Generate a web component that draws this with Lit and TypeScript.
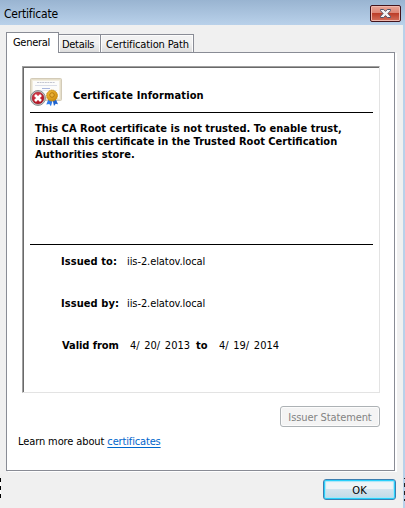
import { LitElement, html, css } from "lit";
import { customElement } from "lit/decorators.js";

@customElement("cert-icon")
class CertIcon extends LitElement {
  static styles = css`
    :host { display: block; width: 32px; height: 29px; }
    svg { display: block; }
  `;
  render() {
    return html`<svg width="32" height="29" viewBox="0 0 32 29">
      <defs>
        <radialGradient id="red" cx=".4" cy=".3" r=".8">
          <stop offset="0" stop-color="#dc4450" /><stop offset="1" stop-color="#a80818" />
        </radialGradient>
        <radialGradient id="gold" cx=".4" cy=".35" r=".75">
          <stop offset="0" stop-color="#f5c040" /><stop offset="1" stop-color="#c98505" />
        </radialGradient>
      </defs>
      <rect x=".5" y=".5" width="31" height="22" rx="1" fill="#e6dfcb" stroke="#d3cbb8" />
      <rect x="2.5" y="2.5" width="27" height="18" fill="#fcfcfb" stroke="#f2eddf" />
      <path d="M7 4.5h18" stroke="#c4c6d0" stroke-dasharray="2 .6" />
      <path d="M5 7.5h22" stroke="#dadde8" />
      <path d="M12 10.5h8" stroke="#a9b6dd" />
      <path d="M5 12.5h22" stroke="#e6e8ef" />
      <path d="M18.5 21l-2.200 5.500 3-.6 1.600 2.300 2-6.500z" fill="#2e7cec" />
      <path d="M22.500 21.500l1.500 6.500 1.700-2.300 2.300.5-2.600-6z" fill="#1e63cf" />
      <circle cx="22" cy="17.600" r="5.500" fill="url(#gold)" stroke="#c58a17" stroke-width=".8" stroke-dasharray="1.500 .5" />
      <circle cx="22" cy="17" r="2.300" fill="#eab23a" stroke="#a96b03" stroke-width=".8" />
      <circle cx="8" cy="20" r="7.400" fill="#d3d6d7" stroke="#858b8c" />
      <circle cx="8" cy="20" r="6" fill="url(#red)" stroke="#8b2731" stroke-width=".5" />
      <path d="M5 17l6 6M11 17l-6 6" stroke="#fff" stroke-width="2.600" />
    </svg>`;
  }
}

@customElement("app-root")
class AppRoot extends LitElement {
  static styles = css`
    * { box-sizing: border-box; }
    :host {
      display: block; position: relative; width: 405px; height: 508px; overflow: hidden;
      background: #f0f0f0; color: #000;
      font: 11px/13px "DejaVu Sans Condensed", "DejaVu Sans", sans-serif;
      font-stretch: condensed; white-space: nowrap;
    }
    b { font-weight: 700; }
    .window { height: 508px; display: flex; flex-direction: column; border-right: 2px solid #b9d1ea; }
    .titlebar {
      height: 25px; margin-right: -2px; padding: 5px 4px 0 4px; display: flex; justify-content: space-between;
      background: linear-gradient(#99b4d1, #b9d1ea); font-size: 12px; line-height: 19px;
    }
    .t-title { letter-spacing: -.2px; }
    .t-general { letter-spacing: -.3px; }
    .t-details { letter-spacing: -.3px; }
    .t-path { letter-spacing: -.13px; }
    .t-info { letter-spacing: .13px; }
    .t-m1 { letter-spacing: .02px; }
    .t-m3, .t-to, .t-by { letter-spacing: .08px; }
    .t-from { letter-spacing: -.05px; }
    .t-host { letter-spacing: -.08px; }
    .t-date { word-spacing: 1.5px; }
    .t-issuer { letter-spacing: -.1px; }
    .t-more { letter-spacing: -.11px; }
    .t-link { letter-spacing: -.15px; }
    .close {
      width: 31px; height: 17px; border: 1px solid #43141c; border-radius: 2px;
      box-shadow: inset 0 0 0 1px #f0b8ae;
      background: linear-gradient(#e9a596 0, #dc8474 48%, #bc3e29 50%, #d4705c 100%);
    }
    .close svg { display: block; margin: 3px 0 0 9px; }
    .tabs { display: flex; align-items: flex-end; height: 21px; margin: 7px 0 -1px 6px; z-index: 1; }
    .tab {
      height: 19px; border: 1px solid #898c95; border-left-width: 0; padding: 3px 0 0 3px;
      box-shadow: inset 1px 1px #fcfcfc, inset -1px 0 #fcfcfc;
      background: linear-gradient(#f2f2f2 45%, #dddddd);
    }
    .tab.on { width: 53px; height: 21px; border-left-width: 1px; border-bottom: 0; background: #fff; padding: 3px 0 0 6px; box-shadow: none; }
    .details { width: 42px; }
    .path { width: 93px; padding-left: 5px; }
    .panel {
      width: 389px; height: 419px; margin-left: 6px; border: 1px solid #898c95; background: #fff;
      box-shadow: 2px 1px #fff; padding: 13px 14px 0 15px; display: flex; flex-direction: column;
    }
    .sheet {
      height: 327px; border: 1px solid; border-color: #a0a0a0 #e3e3e3 #e3e3e3 #a0a0a0;
      box-shadow: inset 1px 1px #696969; padding: 11px 6px 0 7px;
    }
    .head { display: flex; height: 35px; border-bottom: 1px solid #000; }
    .head b { margin: 11px 0 0 11px; }
    .message { height: 132px; padding: 9px 0 0 5px; border-bottom: 1px solid #000; font-weight: 700; }
    .message div { height: 13px; }
    .row { display: flex; height: 42px; padding-left: 31px; }
    .row b { width: 66px; }
    .rows { padding-top: 10px; }
    .date { display: flex; }
    .date b { width: 23px; }
    .date span { width: 69px; padding-left: 3px; }
    .date .until { padding-left: 0; }
    .row.valid { padding-left: 32px; }
    .valid > b { width: 65px; }
    .btn { font: inherit; padding: 0; border-radius: 3px; display: block; }
    .issuer {
      width: 100px; height: 21px; margin: 13px 0 0 auto; padding-top: 1px; color: #838383;
      border: 1px solid #adb2b5; background: #f4f4f4; box-shadow: inset 0 0 0 1px #fcfcfc;
    }
    .more { margin: 8px 0 0 -4px; }
    a { color: #0066cc; text-decoration: underline; text-underline-offset: 2px; }
    .ok {
      width: 73px; height: 21px; margin: 8px 7px 0 auto; padding-top: 1px; color: #000; border: 1px solid #3c7fb1;
      box-shadow: inset 0 0 0 1px #28d0fb, inset 0 0 1px 2px #a8e6f8;
      background: linear-gradient(#eef4f7 48%, #d3e4ee 50%, #c1d9e6);
    }
    .dots { position: absolute; top: 478px; width: 1px; height: 20px; left: 0; background: repeating-linear-gradient(#000 0 4px, #fff 4px 8px); }
    .dots.right { left: 404px; height: 23px; background: repeating-linear-gradient(#222 0 1px, #b9d1ea 1px 5px, #222 5px 8px); }
  `;

  render() {
    return html`
      <div class="window">
        <div class="titlebar">
          <span class="t-title">Certificate</span>
          <div class="close">
            <svg width="11" height="9" viewBox="0 0 11 9">
              <path d="M.5.500h3.200l1.800 1.900L7.300.500h3.200v1.200L7.900 4.500l2.600 2.800v1.200H7.300L5.500 6.600 3.700 8.500H.5V7.300l2.600-2.800L.5 1.700z" fill="#f4f4f4" stroke="#525468" />
            </svg>
          </div>
        </div>
        <div class="tabs">
          <div class="tab on"><span class="t-general">General</span></div>
          <div class="tab details"><span class="t-details">Details</span></div>
          <div class="tab path"><span class="t-path">Certification Path</span></div>
        </div>
        <div class="panel">
          <div class="sheet">
            <div class="head"><cert-icon></cert-icon><b class="t-info">Certificate Information</b></div>
            <div class="message">
              <div class="t-m1">This CA Root certificate is not trusted. To enable trust,</div>
              <div class="t-m2">install this certificate in the Trusted Root Certification</div>
              <div class="t-m3">Authorities store.</div>
            </div>
            <div class="rows">
              <div class="row"><b class="t-to">Issued to:</b><span class="t-host">iis-2.elatov.local</span></div>
              <div class="row"><b class="t-by">Issued by:</b><span class="t-host">iis-2.elatov.local</span></div>
              <div class="row valid">
                <b class="t-from">Valid from</b>
                <div class="date"><span class="t-date">4/ 20/ 2013</span><b>to</b><span class="until t-date">4/ 19/ 2014</span></div>
              </div>
            </div>
          </div>
          <button class="btn issuer" disabled><span class="t-issuer">Issuer Statement</span></button>
          <div class="more"><span class="t-more">Learn more about </span><a class="t-link">certificates</a></div>
        </div>
        <button class="btn ok">OK</button>
      </div>
      <div class="dots"></div>
      <div class="dots right"></div>
    `;
  }
}
